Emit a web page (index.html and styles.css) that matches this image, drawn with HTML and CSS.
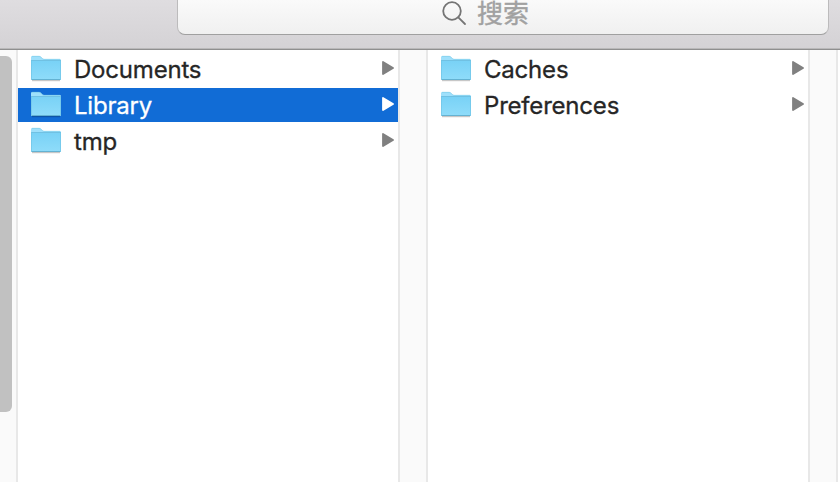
FILE: index.html
```html
<!DOCTYPE html>
<html lang="zh-CN">
<head>
<meta charset="utf-8">
<title>搜索</title>
<link rel="stylesheet" href="styles.css">
</head>
<body>
<svg width="0" height="0" class="defs" aria-hidden="true">
  <defs>
    <linearGradient id="folder-front" x1="0" y1="0" x2="0" y2="1">
      <stop offset="0" stop-color="#79d2f6"/>
      <stop offset="1" stop-color="#8fdcfa"/>
    </linearGradient>
    <symbol id="folder" viewBox="0 0 32 28">
      <path d="M2 25.5H30" stroke="#000" stroke-opacity=".22" stroke-width="1.4"/>
      <path d="M1 2.2Q1 1 2.2 1H9Q10 1 10.8 1.8L12 3Q12.8 4 14 4H29.8Q31 4 31 5V24Q31 25 30 25H2Q1 25 1 24Z" fill="#9fe0fb"/>
      <path d="M1 6H31V24Q31 25 30 25H2Q1 25 1 24Z" fill="url(#folder-front)"/>
      <path d="M1 5.5H31" stroke="#70c1e3"/>
      <path d="M1.5 5V24M30.5 5V24" stroke="#70c4e7" stroke-opacity=".7"/>
      <path d="M1.5 24.5H30.5" stroke="#64b2d2"/>
      <path d="M2 1.3H9Q10 1.3 10.8 2L12 3.2Q12.8 4.3 14 4.3H30" fill="none" stroke="#79c7e6" stroke-width=".6"/>
    </symbol>
    <symbol id="arrow" viewBox="0 0 12 14">
      <path d="M1 1L11 7L1 13Z" fill="currentColor" stroke="currentColor" stroke-width="1.8" stroke-linejoin="round"/>
    </symbol>
  </defs>
</svg>
<div class="window">
  <header class="toolbar">
    <div class="search">
      <svg class="glass" viewBox="0 0 26 26"><circle cx="11" cy="11" r="8.8"/><path d="M17.3 17.3L24 24"/></svg>
      <span class="hint">搜索</span>
    </div>
  </header>
  <main class="browser">
    <div class="gutter first"><div class="thumb"></div></div>
    <section class="column">
      <div class="row"><svg class="folder"><use href="#folder"/></svg><span class="name">Documents</span><svg class="arrow"><use href="#arrow"/></svg></div>
      <div class="row selected"><svg class="folder"><use href="#folder"/></svg><span class="name">Library</span><svg class="arrow"><use href="#arrow"/></svg></div>
      <div class="row"><svg class="folder"><use href="#folder"/></svg><span class="name">tmp</span><svg class="arrow"><use href="#arrow"/></svg></div>
    </section>
    <div class="gutter"></div>
    <section class="column">
      <div class="row"><svg class="folder"><use href="#folder"/></svg><span class="name">Caches</span><svg class="arrow"><use href="#arrow"/></svg></div>
      <div class="row"><svg class="folder"><use href="#folder"/></svg><span class="name">Preferences</span><svg class="arrow"><use href="#arrow"/></svg></div>
    </section>
    <div class="gutter"></div>
  </main>
</div>
</body>
</html>
```
FILE: styles.css
```css
* { box-sizing: border-box; }
body { margin: 0; background: #fff; }
.defs { position: absolute; }
.window {
  width: 840px;
  height: 482px;
  overflow: hidden;
  display: flex;
  flex-direction: column;
  font-family: Inter, "Noto Sans CJK SC", sans-serif;
}
.toolbar {
  height: 50px;
  flex: none;
  padding: 0 11px 0 177px;
  background: linear-gradient(#dfdde0, #d4d2d5);
  border-bottom: 1px solid #8f8f8f;
  box-shadow: inset 0 -1px #b9b8b9;
}
.search {
  height: 35px;
  display: flex;
  justify-content: center;
  border: 1px solid #bcbbbc;
  border-top: 0;
  border-bottom-color: #a0a0a0;
  border-radius: 0 0 8px 8px;
  background: linear-gradient(#fafafa, #f0f0f0);
}
.glass {
  width: 26px;
  height: 26px;
  margin-right: 10px;
  margin-left: -36px;
  fill: none;
  stroke: #757575;
  stroke-width: 1.8;
  stroke-linecap: round;
}
.hint {
  font: 26px/24px "Noto Sans CJK SC", sans-serif;
  color: #a1a1a1;
  -webkit-text-stroke: .4px #a1a1a1;
}
.browser { flex: 1; display: flex; min-height: 0; }
.gutter {
  width: 30px;
  flex: none;
  border: solid #e8e8e8;
  border-width: 0 2px;
  background: #fafafa;
}
.gutter.first { width: 18px; border-left: 0; padding-top: 6px; }
.thumb { width: 12px; height: 356px; border-radius: 0 6px 6px 0; background: #c1c1c1; }
.column {
  width: 380px;
  flex: none;
  padding-top: 2px;
  display: flex;
  flex-direction: column;
  gap: 2px;
}
.row {
  height: 34px;
  display: flex;
  align-items: center;
  padding: 0 4px 0 12px;
  color: #262626;
}
.folder { width: 32px; height: 28px; margin-right: 12px; }
.name {
  font-size: 24px;
  line-height: 34px;
  padding-top: 1px;
  letter-spacing: -.2px;
  -webkit-text-stroke: .3px currentColor;
}
.arrow { width: 12px; height: 14px; margin: 0 0 2px auto; color: #808080; }
.selected { background: #116cd6; color: #fff; }
.selected .arrow { color: #fff; }
```
